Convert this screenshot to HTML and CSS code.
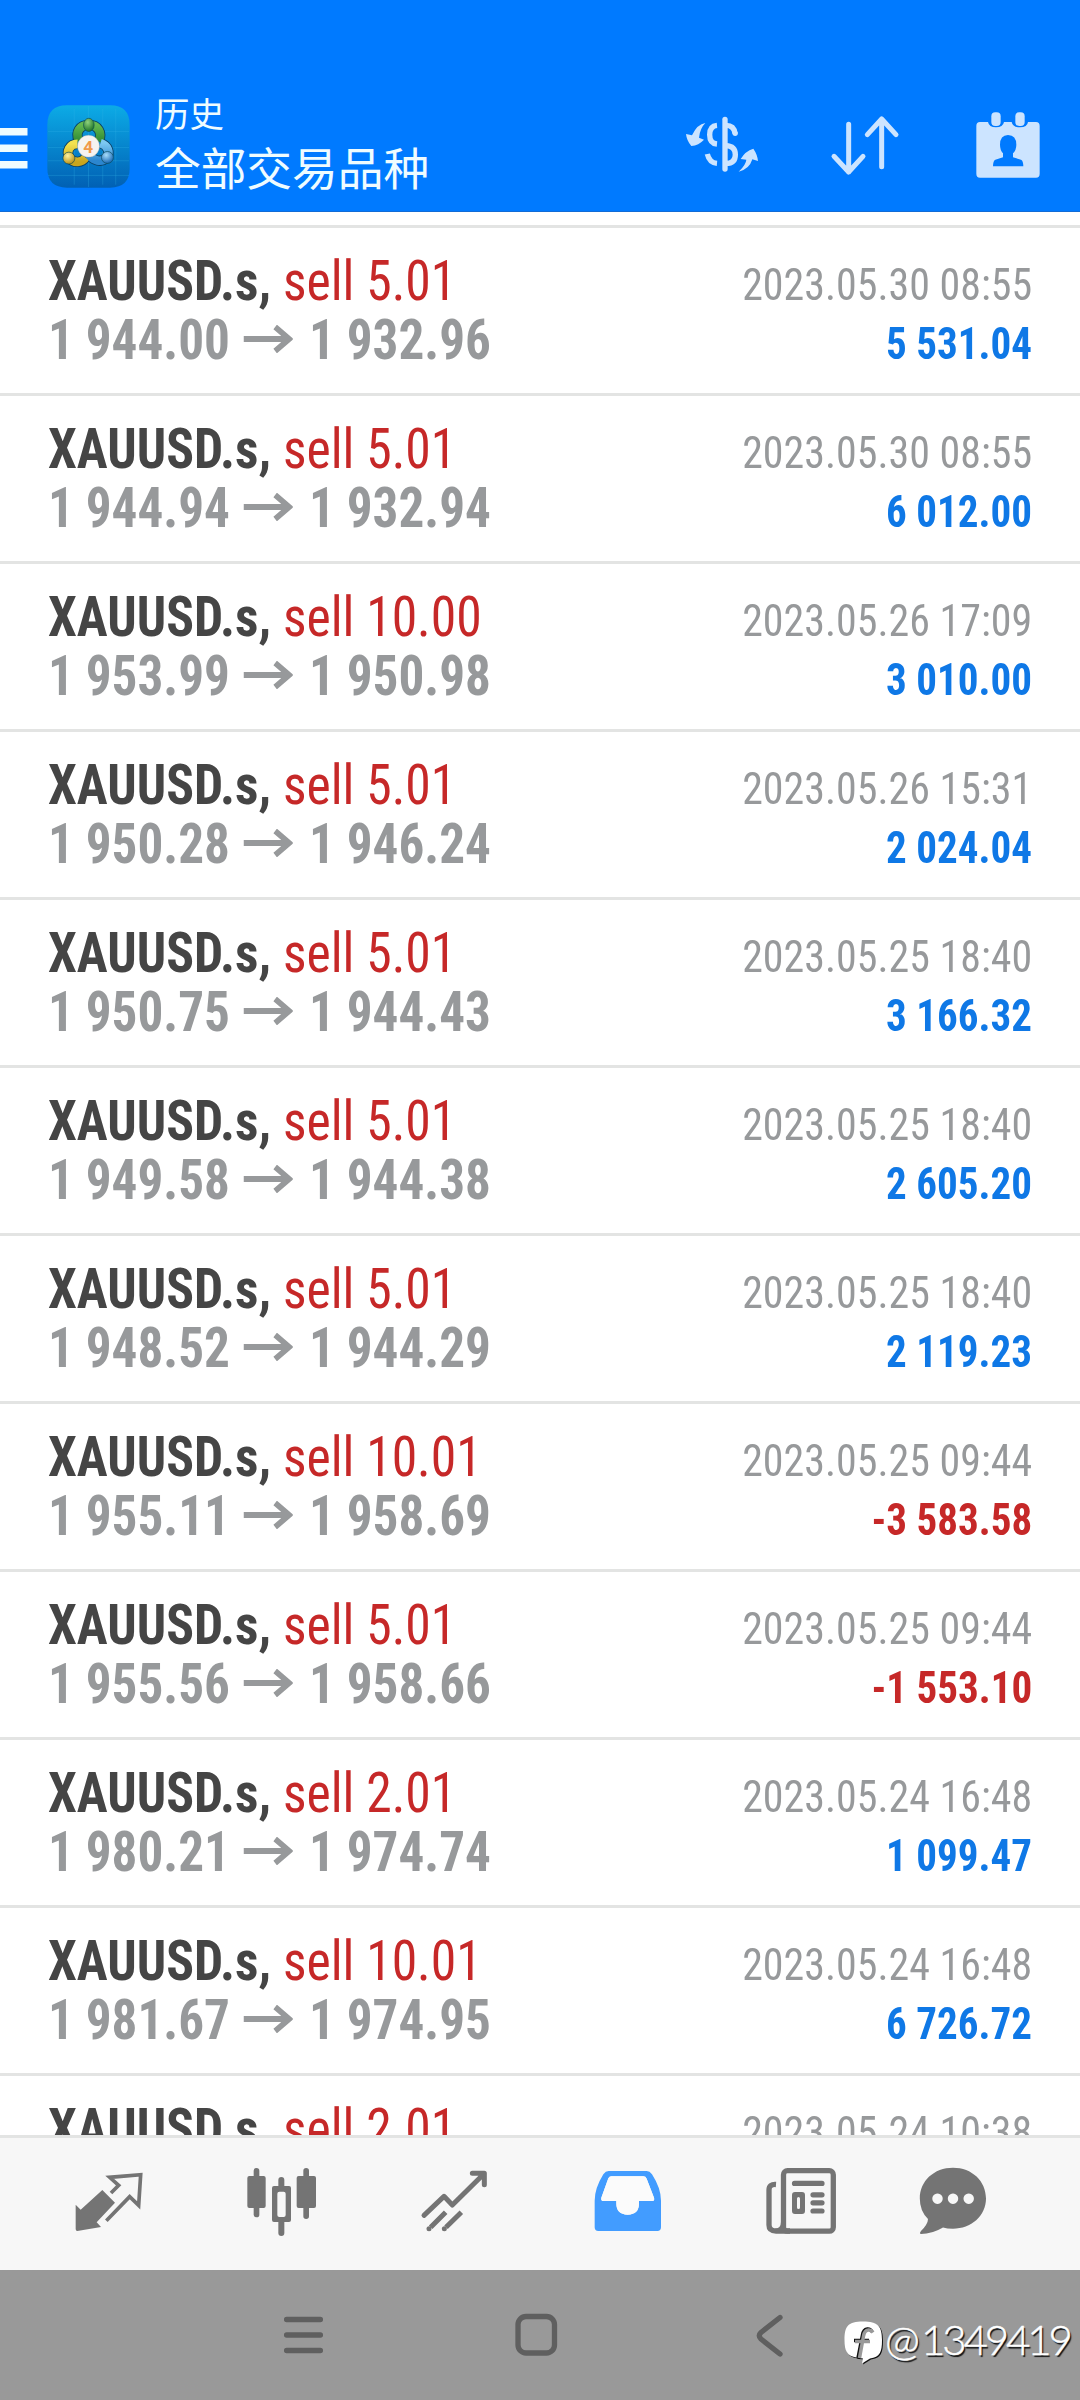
FILE: index.html
```
<!DOCTYPE html>
<html lang="zh-CN">
<head>
<meta charset="utf-8">
<title>历史</title>
<link rel="stylesheet" href="styles.css">
</head>
<body>
<div class="screen">
  <header class="header">
    <svg class="menu" viewBox="0 0 28 42"><path d="M0 0h27.500v7.500H0zM0 16.500h27.500v7.500H0zM0 33h27.500v7.500H0z"/></svg>
    <svg class="app-icon" viewBox="0 0 250 250">
      <defs>
        <linearGradient id="bg" x1="0" y1="0" x2="0" y2="1"><stop offset="0" stop-color="#0cabe6"/><stop offset="1" stop-color="#0160b4"/></linearGradient>
        <linearGradient id="green" x1="0" y1="0" x2="0" y2="1"><stop offset="0" stop-color="#63b84f"/><stop offset="1" stop-color="#2f8a35"/></linearGradient>
        <linearGradient id="gold" x1="0" y1="0" x2="0" y2="1"><stop offset="0" stop-color="#f3e250"/><stop offset="1" stop-color="#c9a51c"/></linearGradient>
        <linearGradient id="blue" x1="0" y1="0" x2="0" y2="1"><stop offset="0" stop-color="#7cc8f2"/><stop offset="1" stop-color="#2b86cf"/></linearGradient>
        <radialGradient id="gball" cx=".4" cy=".3" r=".7"><stop offset="0" stop-color="#8fd27c"/><stop offset="1" stop-color="#1f7428"/></radialGradient>
        <radialGradient id="yball" cx=".4" cy=".3" r=".7"><stop offset="0" stop-color="#fff3a0"/><stop offset="1" stop-color="#b88f14"/></radialGradient>
        <radialGradient id="bball" cx=".4" cy=".3" r=".7"><stop offset="0" stop-color="#a8ddfa"/><stop offset="1" stop-color="#1667b4"/></radialGradient>
      </defs>
      <path fill="url(#bg)" d="M60 1H190Q249 1 249 60V190Q249 249 190 249H60Q1 249 1 190V60Q1 1 60 1Z"/>
      <path stroke="#35b6e8" stroke-opacity=".4" stroke-width="2" d="M3 80H247M3 128H247M3 168H247M3 212H247M82 12V240M125 3V247M168 12V240M207 12V240"/>
      <g fill="none" stroke="#0a3f63" stroke-width="31">
        <path d="M96 108C84 82 99 60 126 60S168 82 156 110"/>
        <path d="M92 117C68 117 56 141 68 159S106 174 116 158"/>
        <path d="M161 115C184 122 192 145 179 159S138 172 122 142"/>
      </g>
      <g fill="none" stroke-width="26">
        <path stroke="url(#green)" d="M96 108C84 82 99 60 126 60S168 82 156 110"/>
        <path stroke="url(#gold)" d="M92 117C68 117 56 141 68 159S106 174 116 158"/>
        <path stroke="url(#blue)" d="M161 115C184 122 192 145 179 159S138 172 122 142"/>
      </g>
      <g stroke="#0a4a58" stroke-width="2">
        <ellipse cx="126" cy="60" rx="16" ry="20" fill="url(#gball)"/>
        <circle cx="66" cy="160" r="18" fill="url(#yball)"/>
        <circle cx="182" cy="158" r="18" fill="url(#bball)"/>
      </g>
      <circle cx="125" cy="124" r="33" fill="#f5f3f0" stroke="#a9a9a0" stroke-width="1"/>
      <text x="124" y="144" class="app-digit">4</text>
    </svg>
    <div class="titles">
      <div class="subtitle">历史</div>
      <div class="title">全部交易品种</div>
    </div>
    <div class="actions">
      <svg class="ic-dollar" viewBox="75 60 225 210">
        <path d="M187 88a8 8 0 0 1 16 0V237a8 8 0 0 1-16 0Z"/>
        <path class="line" d="M198 106Q222 106 225 130M171 106Q149 108 149 134T171 162M198 167Q226 168 226 194T198 220M142 192Q148 218 171 220"/>
        <circle cx="225.500" cy="130" r="8"/>
        <path d="M136 99Q112 102 96 136L78 132Q80 152 94 168Q116 166 132 149L117 143Q120 115 136 99ZM236 245Q258 224 259 209L242 207Q256 183 280 176Q292 193 294 213L277 208Q268 238 236 245Z"/>
      </svg>
      <svg class="ic-sort" viewBox="510 60 210 210"><path d="M566 103V246M522 199L566 246L609 199M665 230V87M622 134L665 87L708 134"/></svg>
      <svg class="ic-cal" viewBox="945 60 198 210">
        <path fill-rule="evenodd" d="M960 96H984Q987 112 1008 112T1032 96H1055Q1058 112 1080 112T1104 96H1128Q1139 96 1139 108V251Q1139 263 1128 263H960Q949 263 949 251V108Q949 96 960 96ZM1044 135Q1020 136 1020 164Q1020 180 1029 190V202L1006 209Q999 212 999 229H1090Q1090 212 1083 209L1059 202V190Q1069 180 1069 164Q1069 136 1044 135Z"/>
        <rect x="994" y="67" width="28" height="41" rx="12"/><rect x="1066" y="67" width="28" height="41" rx="12"/>
      </svg>
    </div>
  </header>

  <main class="list" id="list"></main>

  <nav class="tabs">
    <svg viewBox="30 30 240 240">
      <path class="fill" d="M127 120L165 158L110 217L123 231L52 243Q47 243 47 237V164L62 179Z"/>
      <path class="quote-line" d="M153 129L176 106L149 82L242 74L236 166L209 140L139 212"/>
    </svg>
    <svg viewBox="530 30 240 240">
      <path class="fill" d="M561 84q0-6 6-6h13V62q0-8 8.500-8t8.500 8v16h13q6 0 6 6v84q0 6-6 6h-13v20q0 8-8.500 8t-8.500-8v-20h-13q-6 0-6-6ZM709 84q0-6 6-6h14V62q0-8 8.500-8t8.500 8v16h15q6 0 6 6v84q0 6-6 6h-15v25q0 8-8.500 8t-8.500-8v-25h-14q-6 0-6-6Z"/>
      <path class="fill" fill-rule="evenodd" d="M635 114q0-6 6-6h13V90q0-9 9-9t9 9v18h14q6 0 6 6v96q0 6-6 6h-14v33q0 9-9 9t-9-9v-33h-13q-6 0-6-6ZM657 125q-6 0-6 6v64q0 6 6 6h13q6 0 6-6v-64q0-6-6-6Z"/>
    </svg>
    <svg viewBox="45 30 240 240">
      <path class="trade-line" d="M72 196L132 139L157 165L249 74M217 70H253V104"/><path class="trade-line butt" d="M137 187L92 232M184 187L138 232"/>
      <circle class="fill" cx="87" cy="236" r="7.500"/><circle class="fill" cx="133" cy="236" r="7.500"/>
    </svg>
    <svg viewBox="563 30 240 240">
      <path class="active" fill-rule="evenodd" d="M625 63H739Q748 63 755 73Q782 115 782 152V232Q782 243 771 243H594Q583 243 583 232V152Q583 115 609 73Q616 63 625 63ZM633 79Q627 79 624 85L603 143Q601 153 610 153H648V160Q648 194 682 194T716 160V153H754Q764 153 761 143L739 86Q736 79 729 79Z"/>
      <path class="tray" d="M633 79Q627 79 624 85L603 143Q601 153 610 153H648V160Q648 194 682 194T716 160V153H754Q764 153 761 143L739 86Q736 79 729 79Z"/>
    </svg>
    <svg viewBox="761 2160 80 80">
      <rect class="news-frame" x="783.500" y="2170.700" width="49.800" height="60.500" rx="4"/>
      <path class="news-frame" d="M776 2184.500Q769 2184 769 2190V2225Q769 2231 776 2231H790"/><path class="fill" d="M774 2229Q781 2229 781 2222H785V2233H774Z"/>
      <path class="news-text" d="M794.500 2183.400H822M813 2194.800H822M813 2202.800H822M813 2211H822"/>
      <path class="fill" fill-rule="evenodd" d="M795 2192h7q3 0 3 3v16q0 3-3 3h-7q-3 0-3-3v-16q0-3 3-3ZM798.500 2197q-1.500 0-1.500 1.500v9q0 1.500 1.500 1.500t1.500-1.500v-9q0-1.500-1.500-1.500Z"/>
    </svg>
    <svg viewBox="913 2160 80 80">
      <path class="fill" fill-rule="evenodd" d="M953 2167.700C972 2167.700 986 2181 986 2198.500S971 2228.700 953 2228.700Q947 2228.700 943 2227.500Q932 2234 921 2234Q919 2233.500 921 2231Q928 2224 928 2219Q919.800 2211 919.800 2198.500C919.800 2181 934 2167.700 953 2167.700ZM937.500 2193.500a5.200 5.200 0 1 0 .01 0ZM953 2193.500a5.200 5.200 0 1 0 .01 0ZM968.700 2193.500a5.200 5.200 0 1 0 .01 0Z"/>
    </svg>
  </nav>

  <footer class="sysbar">
    <svg viewBox="0 0 50 50"><path d="M8.600 9.500H42.400M8.600 25H42.400M8.600 40.500H42.400"/></svg>
    <svg viewBox="0 0 50 50"><rect x="7" y="6.500" width="36.500" height="36.500" rx="8"/></svg>
    <svg viewBox="0 0 50 50"><path d="M36 7.500L17 22.500Q13.500 25.800 17 29L36 44"/></svg>
    <div class="watermark">
      <svg viewBox="0 0 42 46"><path class="bubble" d="M20 1.500C35 1.500 39 6 39 20C39 32 37 37 27 38.500L19 43.500L20 38.500C18 38 16 38 13.500 37.500C4 36 1.500 31 1.500 20C1.500 6 5 1.500 20 1.500Z"/><path class="mark-shade" d="M29 11.500Q27 8.500 24 9Q20.500 9.500 19.500 15L15 38M11 20.500H26"/><path class="mark" d="M30 12.500Q28 9.500 25 10Q21.500 10.500 20.500 16L16.500 38M12 21.500H27"/></svg>
      <span class="at">@</span><span class="num">1349419</span>
    </div>
  </footer>
</div>
<script src="app.js"></script>
</body>
</html>
```
FILE: styles.css
```
* { box-sizing: border-box; }
body { margin: 0; background: #fff; }
.screen { width: 1080px; height: 2400px; display: flex; flex-direction: column; overflow: hidden; font-family: "Roboto Condensed", Roboto, "Noto Sans CJK SC", sans-serif; }

.header { flex: none; height: 212px; padding-top: 92px; display: flex; align-items: flex-start; background: #007aff; border-bottom: 1px solid #126cd6; color: #effcff; }
.menu { width: 28px; height: 42px; margin-top: 36px; fill: #effcff; }
.app-icon { width: 83px; height: 83px; margin: 13px 0 0 19px; }
.app-digit { font: bold 52px Roboto, sans-serif; fill: #f09a4a; text-anchor: middle; }
.titles { margin-left: 25px; font-family: "Noto Sans CJK SC", sans-serif; white-space: nowrap; }
.subtitle { font-size: 34.500px; line-height: 41px; }
.title { font-size: 45.700px; line-height: 67px; }
.actions { flex: 1; display: flex; justify-content: flex-end; padding: 18px 39px 0 0; fill: #cce4ff; }
.ic-dollar { width: 75px; height: 70px; margin-right: 70px; }
.ic-dollar .line { fill: none; stroke: #cce4ff; stroke-width: 16; }
.ic-sort { width: 70px; height: 70px; margin-right: 75px; fill: none; stroke: #cce4ff; stroke-width: 15; stroke-linecap: round; stroke-linejoin: round; }
.ic-cal { width: 66px; height: 70px; }

.list { flex: 1; min-height: 0; padding-top: 13px; overflow: hidden; }
.deal { height: 168px; border-top: 3px solid #e3e4e3; padding: 24px 48px 0 48px; display: flex; justify-content: space-between; font-size: 55px; line-height: 59px; white-space: nowrap; }
.name, .prices { transform-origin: 0 0; }
.name { transform: scaleX(.938); }
.prices { transform: scaleX(.931); display: flex; font-weight: 700; color: #97999b; }
.prices span { width: 195.400px; }
.right { display: flex; flex-direction: column; align-items: flex-end; font-size: 45px; color: #97999b; padding-top: 3px; }
.time, .profit { transform-origin: 100% 0; }
.time { transform: scaleX(.932); font-weight: 430; }
.profit { transform: scaleX(.912); font-weight: 700; color: #0f78e6; }
.profit.loss { color: #c62828; }
.symbol { font-weight: 700; color: #454545; }
.side { color: #c62828; font-weight: 440; }
.arrow { width: 53px; height: 28px; margin: 14px 17px 0 15px; fill: none; stroke: #97999b; stroke-width: 6; }

.tabs { flex: none; height: 135px; border-top: 3px solid #e3e4e3; background: #f7f7f7; display: grid; grid-template-columns: 167px 178px 173px 173px 152px 80px; padding: 22px 0 0 70px; }
.tabs svg { width: 80px; height: 80px; }
.tabs .fill { fill: #747474; }
.quote-line, .trade-line, .news-frame, .news-text { fill: none; stroke: #747474; }
.quote-line { stroke-width: 11; }
.trade-line { stroke-width: 15; stroke-linecap: round; stroke-linejoin: round; }
.trade-line.butt { stroke-linecap: butt; }
.active { fill: #429cff; }
.tray { fill: #fbfbfb; }
.news-frame { stroke-width: 5.300; }
.news-text { stroke-width: 5.200; stroke-linecap: round; }

.sysbar { flex: none; height: 130px; position: relative; background: #999; padding: 40px 0 0 278px; display: flex; gap: 183px; }
.sysbar > svg { width: 50px; height: 50px; fill: none; stroke: #5f5f5f; stroke-width: 5.300; stroke-linecap: round; stroke-linejoin: round; }
.watermark { position: absolute; left: 843px; top: 50px; display: flex; align-items: flex-start; color: #fff; font: 300 42px/50px Lato, sans-serif; text-shadow: 1.500px 1.500px 1px #111; -webkit-text-stroke: .5px #fff; }
.watermark svg { width: 42px; height: 46px; filter: drop-shadow(1.500px 1.500px 0 #111); }
.watermark span { margin-top: -6px; }
.bubble { fill: #fff; }
.mark, .mark-shade { fill: none; stroke: #999; stroke-width: 3.500; }
.mark-shade { stroke: #111; }
.at { width: 36px; }
.num { letter-spacing: -3.100px; }
```
FILE: app.js
```
const deals = [
  ['5.01', '1 944.00', '1 932.96', '2023.05.30 08:55', '5 531.04'],
  ['5.01', '1 944.94', '1 932.94', '2023.05.30 08:55', '6 012.00'],
  ['10.00', '1 953.99', '1 950.98', '2023.05.26 17:09', '3 010.00'],
  ['5.01', '1 950.28', '1 946.24', '2023.05.26 15:31', '2 024.04'],
  ['5.01', '1 950.75', '1 944.43', '2023.05.25 18:40', '3 166.32'],
  ['5.01', '1 949.58', '1 944.38', '2023.05.25 18:40', '2 605.20'],
  ['5.01', '1 948.52', '1 944.29', '2023.05.25 18:40', '2 119.23'],
  ['10.01', '1 955.11', '1 958.69', '2023.05.25 09:44', '-3 583.58'],
  ['5.01', '1 955.56', '1 958.66', '2023.05.25 09:44', '-1 553.10'],
  ['2.01', '1 980.21', '1 974.74', '2023.05.24 16:48', '1 099.47'],
  ['10.01', '1 981.67', '1 974.95', '2023.05.24 16:48', '6 726.72'],
  ['2.01', '', '', '2023.05.24 10:38', '']
];
document.getElementById('list').innerHTML = deals.map(([volume, open, close, time, profit]) => `
  <section class="deal">
    <div class="left">
      <div class="name"><span class="symbol">XAUUSD.s,</span> <span class="side">sell ${volume}</span></div>
      ${open && `<div class="prices"><span>${open}</span><svg class="arrow" viewBox="0 0 53 28"><path d="M0 14H49M34 2L49 14L34 26"/></svg><span>${close}</span></div>`}
    </div>
    <div class="right">
      <div class="time">${time}</div>
      ${profit && `<div class="profit${profit[0] === '-' ? ' loss' : ''}">${profit}</div>`}
    </div>
  </section>`).join('');
```
